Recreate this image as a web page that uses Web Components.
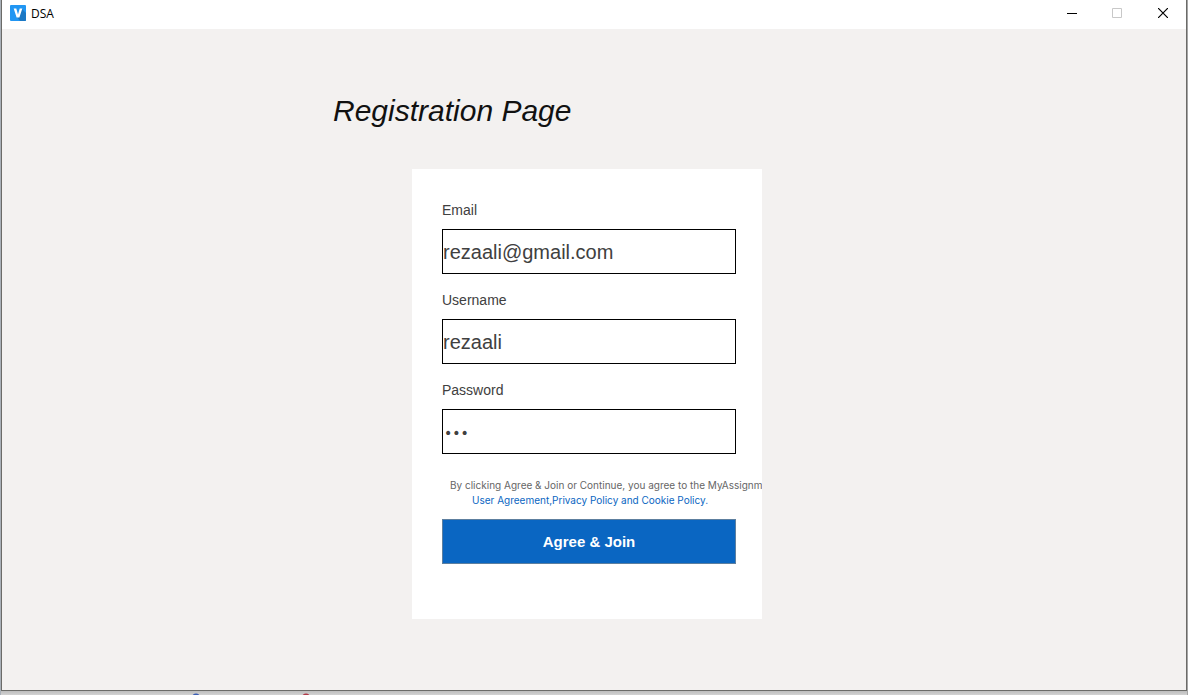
<!DOCTYPE html>
<html lang="en">
<head>
<meta charset="utf-8">
<title>DSA</title>
<style>
  html, body { height: 100%; }
  body { margin: 0; background: #c9c9c9; font-family: "Liberation Sans", Arial, sans-serif; }
</style>
</head>
<body>
<app-window caption="DSA">
  <registration-page>
    <form-field label="Email" type="email" value="rezaali@gmail.com"></form-field>
    <form-field label="Username" type="text" value="rezaali"></form-field>
    <form-field label="Password" type="password" value="123"></form-field>
    <terms-note></terms-note>
    <submit-button>Agree &amp; Join</submit-button>
  </registration-page>
</app-window>
<script>
const define = (name, html, setup) => customElements.define(name, class extends HTMLElement {
  constructor() {
    super();
    this.attachShadow({ mode: 'open' }).innerHTML = html;
  }
  connectedCallback() { if (setup) setup(this, this.shadowRoot); }
});

define('app-window', `
<style>
  :host { display: flex; box-sizing: border-box; height: 100vh; padding: 0 1px 4px;
    background: linear-gradient(90deg, #a9b0b8 0 1px, transparent 1px calc(100% - 1px), #a5a5a5 calc(100% - 1px)),
      radial-gradient(circle at 196px 698px, #3c5fb4 0 4px, transparent 5px),
      radial-gradient(circle at 306px 698px, #b03a48 0 4px, transparent 5px),
      linear-gradient(0deg, #d2d2d2, #bdbdbd 4px); }
  section { flex: 1; display: flex; flex-direction: column; border: 1px solid #6b6b68; border-top: 0; background: #f3f1f0; }
  header { display: flex; align-items: center; height: 29px; background: #fff; }
  .logo { width: 16px; height: 16px; margin: 0 5px 4px 8px; }
  .name { flex: 1; font: 12px/16px "Open Sans", "Noto Sans", sans-serif; color: #000; padding-bottom: 2px; }
  button { width: 46px; height: 26px; margin-bottom: 3px; padding: 0; border: 0; background: none; display: grid; place-items: center; }
  main { flex: 1; }
</style>
<section>
  <header>
    <svg class="logo" viewBox="0 0 16 16" aria-hidden="true">
      <rect width="16" height="16" rx="1" fill="#2196f3"/>
      <path d="M12 4 16 8V15Q16 16 15 16H10L7 12Z" fill="#1b78c4"/>
      <path d="M3.700 3.500H6.300L8 9.500 9.700 3.500H12.300L9.400 12.500H6.600Z" fill="#fff"/>
    </svg>
    <span class="name"></span>
    <button aria-label="Minimize"><svg width="12" height="10"><path d="M2 5.500H12" stroke="#000"/></svg></button>
    <button aria-label="Maximize" disabled><svg width="10" height="10"><path d="M.5 .5H9.500V9.500H.5Z" fill="none" stroke="#c8c8c8"/></svg></button>
    <button aria-label="Close"><svg width="10" height="10"><path d="M0 0 10 10M10 0 0 10" stroke="#000" stroke-width="1.200"/></svg></button>
  </header>
  <main><slot></slot></main>
</section>`, (host, root) => {
  root.querySelector('.name').textContent = host.getAttribute('caption');
});

define('registration-page', `
<style>
  :host { display: grid; grid-template-columns: 331fr 79px 350px 424fr; padding-top: 62px; }
  h1 { grid-column: 2 / 4; margin: 0 0 38px; font-size: 30px; line-height: 40px; font-weight: 400; font-style: italic; color: #111; }
  form { grid-column: 3; box-sizing: border-box; min-height: 450px; padding: 30px 26px 30px 30px; background: #fff; overflow: hidden; }
</style>
<h1>Registration Page</h1>
<form><slot></slot></form>`);

define('form-field', `
<style>
  :host { display: block; margin-bottom: 15px; }
  label { display: block; font-size: 14px; line-height: 22px; margin-bottom: 8px; color: #404040; }
  input { display: block; box-sizing: border-box; width: 100%; height: 45px; padding: 2px 0 0; border: 1px solid #000; border-radius: 0;
    background: #fff; font: 20px "Liberation Sans", Arial, sans-serif; color: #404040; outline: 0; }
  input[type=password] { padding-left: 1px; font: 14px "DejaVu Sans", sans-serif; }
</style>
<label for="field"></label>
<input id="field">`, (host, root) => {
  root.querySelector('label').textContent = host.getAttribute('label');
  const input = root.querySelector('input');
  input.type = host.getAttribute('type');
  input.value = host.getAttribute('value');
});

define('terms-note', `
<style>
  :host { display: block; padding-top: 9px; font: 10px/15px Inter, "Liberation Sans", sans-serif; color: #666; white-space: nowrap; }
  p { margin: 0 0 0 8px; }
  p + p { margin: 0 0 11px 30px; }
  a { color: #0a66c2; text-decoration: none; }
</style>
<p>By clicking Agree &amp; Join or Continue, you agree to the MyAssignm</p>
<p><a href="#agreement">User Agreement,Privacy Policy and Cookie Policy.</a></p>`);

define('submit-button', `
<style>
  :host { display: block; }
  button { display: block; width: 100%; height: 45px; padding: 0; border: 1px solid #5d7f9f; background: #0a66c2;
    color: #fff; font: bold 15px "Liberation Sans", Arial, sans-serif; }
</style>
<button type="button"><slot></slot></button>`);
</script>
</body>
</html>
